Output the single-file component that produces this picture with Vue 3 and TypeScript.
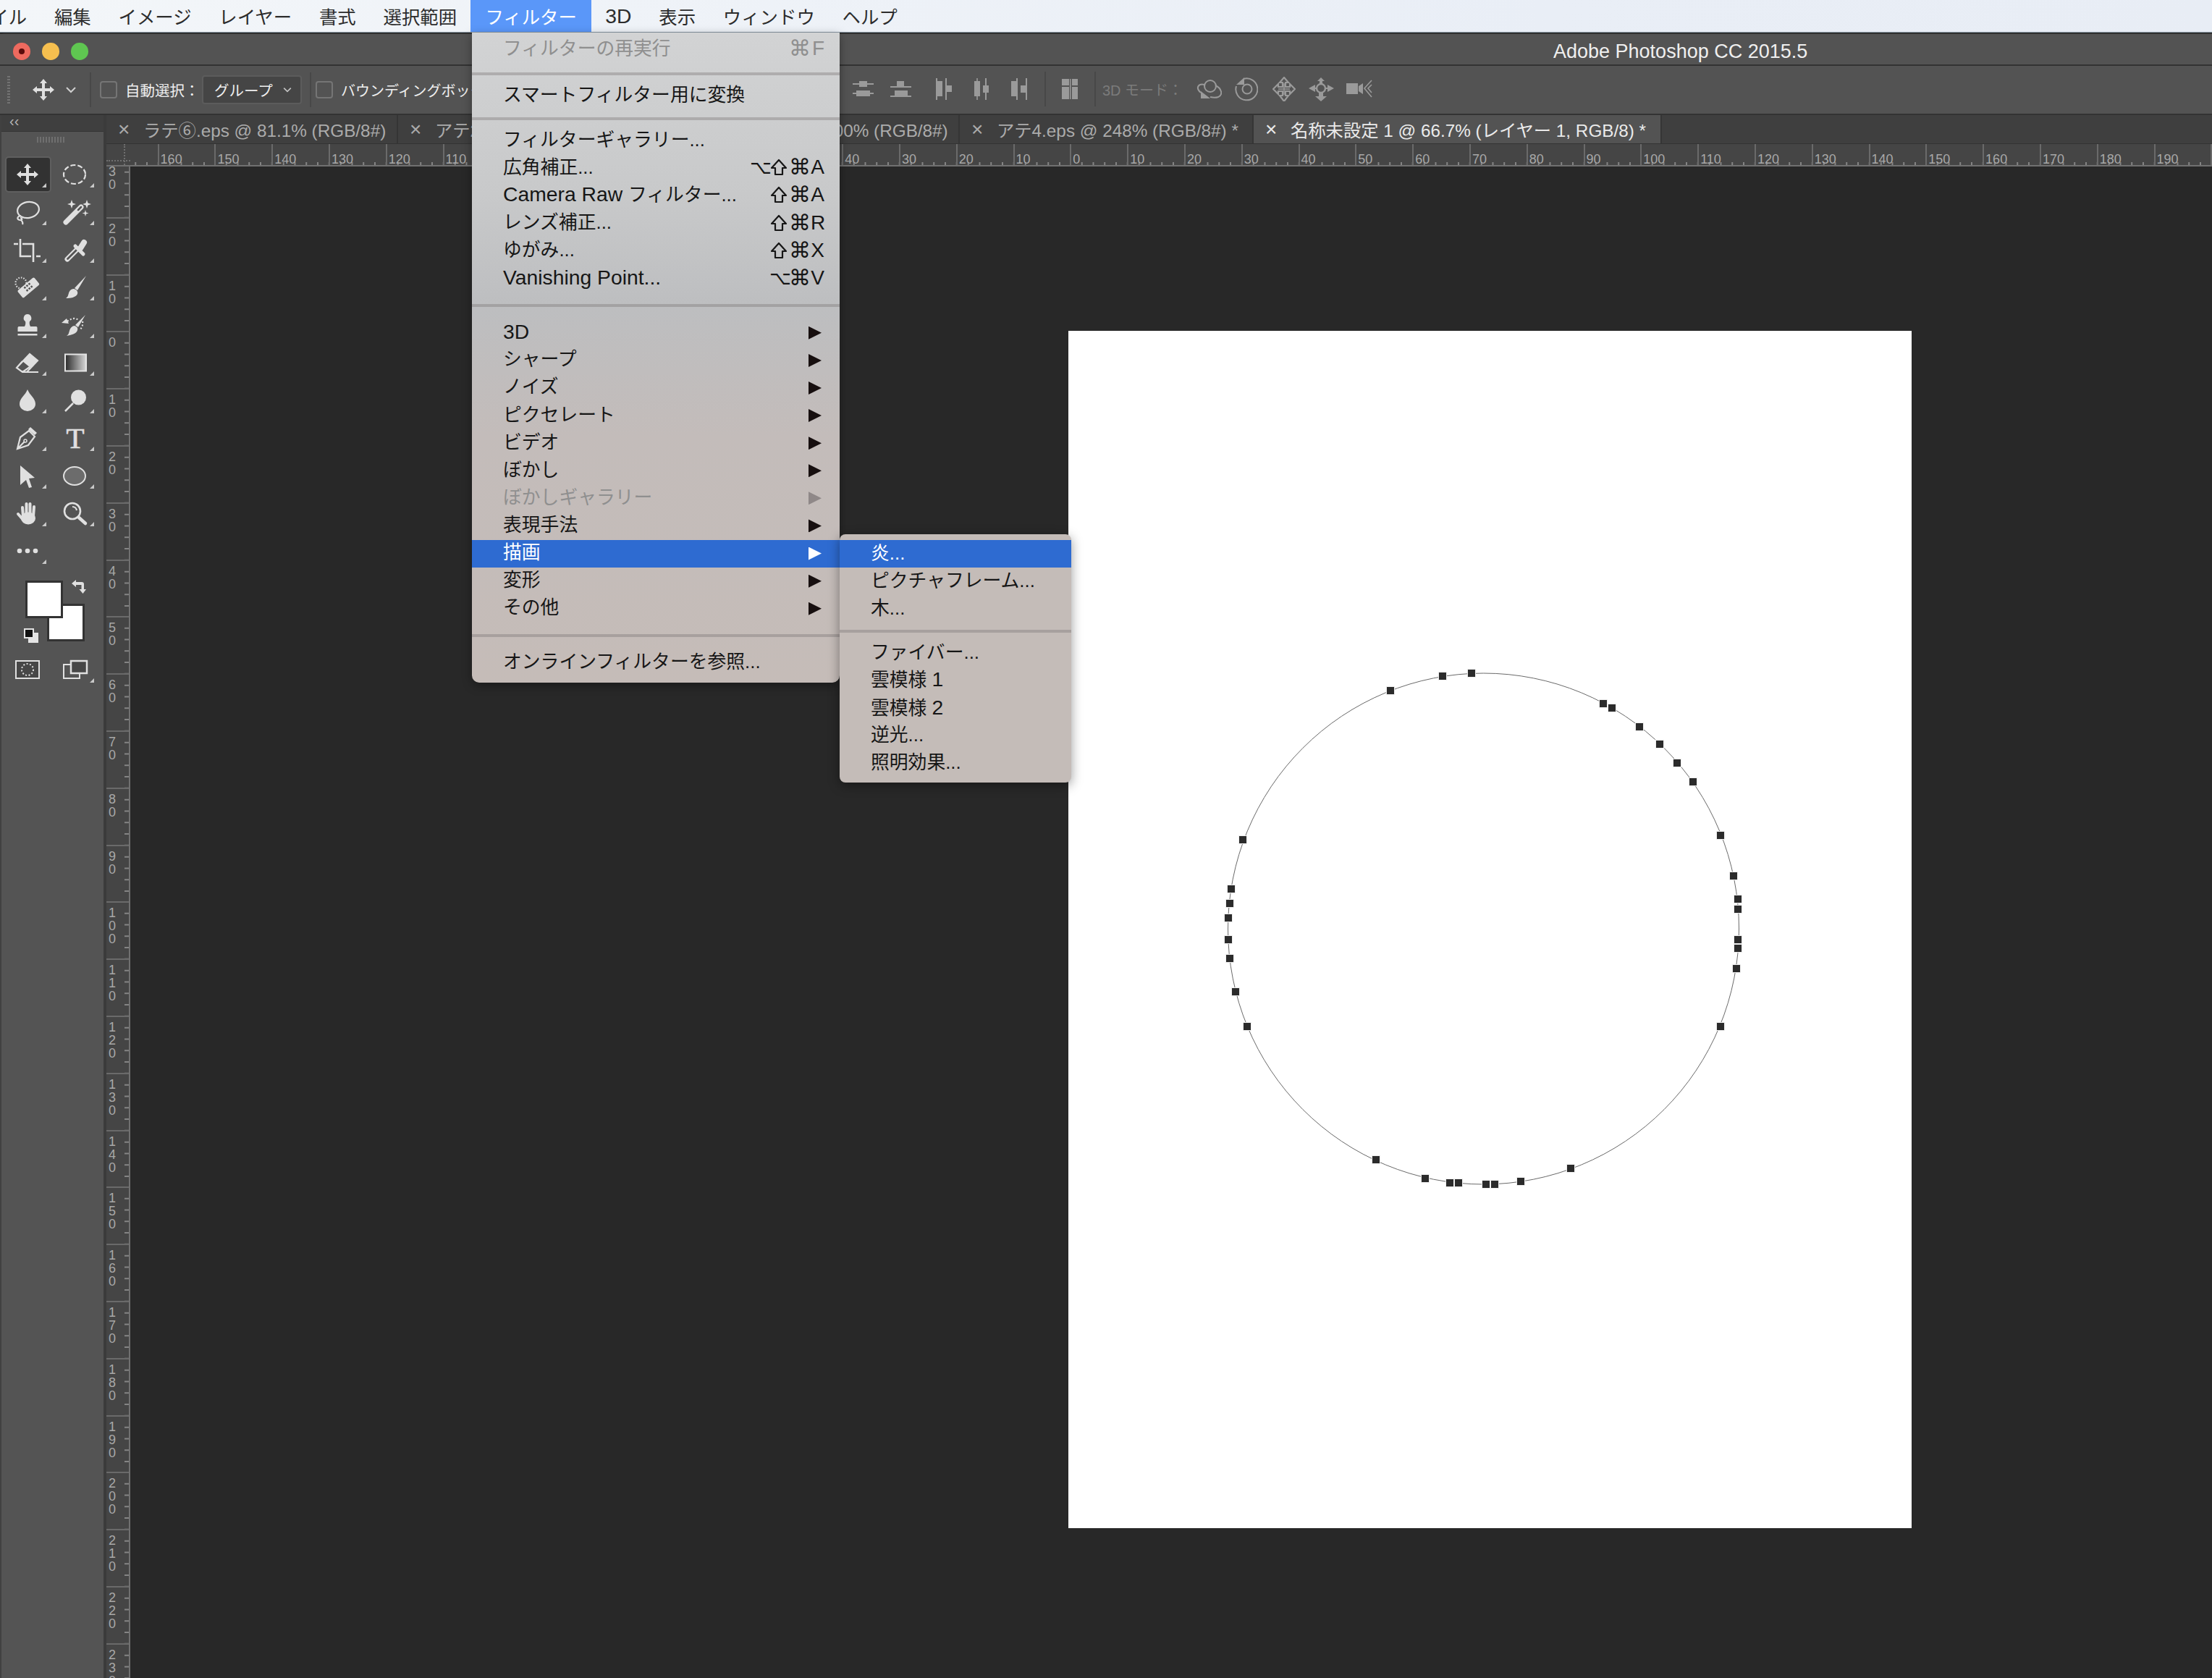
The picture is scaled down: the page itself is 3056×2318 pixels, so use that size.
<script setup lang="ts">
type Item = { lat?: string; label?: string; keys?: string[]; off?: boolean; sub?: boolean; active?: boolean; sep?: string }

const menubar = ['ファイル', '編集', 'イメージ', 'レイヤー', '書式', '選択範囲', 'フィルター', '3D', '表示', 'ウィンドウ', 'ヘルプ']

const mainMenu: Item[] = [
  { label: 'フィルターの再実行', off: true, keys: ['⌘', 'F'] },
  { sep: 'a' },
  { label: 'スマートフィルター用に変換' },
  { sep: 'b' },
  { label: 'フィルターギャラリー...' },
  { label: '広角補正...', keys: ['⌥', '⇧', '⌘', 'A'] },
  { lat: 'Camera Raw ', label: 'フィルター...', keys: ['⇧', '⌘', 'A'] },
  { label: 'レンズ補正...', keys: ['⇧', '⌘', 'R'] },
  { label: 'ゆがみ...', keys: ['⇧', '⌘', 'X'] },
  { lat: 'Vanishing Point...', keys: ['⌥', '⌘', 'V'] },
  { sep: 'c' },
  { lat: '3D', sub: true },
  { label: 'シャープ', sub: true },
  { label: 'ノイズ', sub: true },
  { label: 'ピクセレート', sub: true },
  { label: 'ビデオ', sub: true },
  { label: 'ぼかし', sub: true },
  { label: 'ぼかしギャラリー', sub: true, off: true },
  { label: '表現手法', sub: true },
  { label: '描画', sub: true, active: true },
  { label: '変形', sub: true },
  { label: 'その他', sub: true },
  { sep: 'c' },
  { label: 'オンラインフィルターを参照...' }
]

const subMenu: Item[] = [
  { label: '炎...', active: true },
  { label: 'ピクチャフレーム...' },
  { label: '木...' },
  { sep: 'd' },
  { label: 'ファイバー...' },
  { label: '雲模様 ', lat: '1' },
  { label: '雲模様 ', lat: '2' },
  { label: '逆光...' },
  { label: '照明効果...' }
]

const tabs = [
  { text: 'ラテ⑥.eps @ 81.1% (RGB/8#)', w: 403 },
  { text: 'アテ2.eps @ 100% (RGB/8#)', w: 391 },
  { text: 'アテ3.eps @ 100% (RGB/8#)', w: 385 },
  { text: 'アテ4.eps @ 248% (RGB/8#) *', w: 406 },
  { text: '名称未設定 1 @ 66.7% (レイヤー 1, RGB/8) *', w: 564, on: true }
]

const hTicks: number[] = []
for (let n = -170; n <= 200; n += 10) hTicks.push(n)
const vTicks: number[] = []
for (let n = -30; n <= 240; n += 10) vTicks.push(n)

const anchors: [number, number][] = [
  [1921, 955], [1993, 935], [2033, 931], [2215, 973], [2227, 979], [2265, 1005], [2293, 1029], [2317, 1055],
  [2339, 1081], [2377, 1155], [2395, 1211], [2401, 1243], [2401, 1257], [2401, 1299], [2401, 1311], [2399, 1339],
  [1717, 1161], [1701, 1229], [1699, 1249], [1697, 1269], [1697, 1299], [1699, 1325], [1707, 1371], [1723, 1419],
  [2377, 1419], [1901, 1603], [1969, 1629], [2003, 1635], [2015, 1635], [2053, 1637], [2065, 1637], [2101, 1633], [2170, 1615]
]
const docX = 1476
const docY = 458

function keyClass(k: string): string {
  if (k === '⌘') return 'k-sym k-cmd'
  if (k === '⌥') return 'k-sym k-opt'
  return 'k-letter'
}
</script>

<template>
  <div class="screen">
    <nav class="menubar">
      <span v-for="m in menubar" :key="m" class="mb-item" :class="{ on: m === 'フィルター', lat: m === '3D' }">{{ m }}</span>
    </nav>

    <div class="window">
      <header class="titlebar">
        <div class="lights">
          <i class="light red"><b></b></i>
          <i class="light yellow"></i>
          <i class="light green"></i>
        </div>
        <span class="title">Adobe Photoshop CC 2015.5</span>
      </header>

      <div class="options">
        <i class="grip"></i>
        <svg class="opt-move" width="34" height="32" viewBox="16 10 34 32"><path class="ico" d="M33 11l5 6h-3v7h7v-3l6 5-6 5v-3h-7v7h3l-5 6-5-6h3v-7h-7v3l-6-5 6-5v3h7v-7h-3z" /></svg>
        <svg class="chev" width="14" height="10" viewBox="0 0 14 10"><path d="M1 2l6 6 6-6" fill="none" stroke="#cfcfcf" stroke-width="2" /></svg>
        <i class="opt-sep s1"></i>
        <i class="check c1"></i>
        <span class="opt-label">自動選択：</span>
        <div class="select"><span>グループ</span><svg width="12" height="8" viewBox="0 0 14 10"><path d="M1 2l6 6 6-6" fill="none" stroke="#c4c4c4" stroke-width="2" /></svg></div>
        <i class="opt-sep s2"></i>
        <i class="check c2"></i>
        <span class="opt-label bbox">バウンディングボックスを表示</span>
        <div class="dim-icons">
          <svg width="29" height="32" viewBox="0 0 29 32"><path class="dim" d="M9 5h11v8H9zM0 8h29v2H0zM5 18h19v8H5zM0 21h29v2H0z" /></svg>
          <svg class="g23" width="29" height="32" viewBox="0 0 29 32"><path class="dim" d="M9 5h10v8H9zM0 12h29v2H0zM6 18h18v8H6zM0 25h29v2H0z" /></svg>
          <svg class="g34" width="22" height="32" viewBox="0 0 22 32"><path class="dim" d="M0 1h2v30H0zM1 5h8v21H1zM13 1h2v30h-2zM14 11h8v9h-8z" /></svg>
          <svg class="g31" width="20" height="32" viewBox="0 0 20 32"><path class="dim" d="M3.200 1h1.600v30H3.200zM0 5h8v21H0zM15 1h2v30h-2zM12 11h8v10h-8z" /></svg>
          <svg class="g31" width="22" height="32" viewBox="0 0 22 32"><path class="dim" d="M0 5h8v21H0zM7 1h2v30H7zM13 11h8v10h-8zM20 1h2v30h-2z" /></svg>
          <i class="opt-sep s3"></i>
          <svg class="g22" width="22" height="32" viewBox="0 0 22 32"><path class="dim" d="M0 2h10v9H0zM14 2h8v9h-8zM0 13h10v17H0zM14 13h8v17h-8zM11 2h1.500v28H11z" /></svg>
          <i class="opt-sep s4"></i>
          <span class="mode3d">3D モード：</span>
          <svg width="36" height="32" viewBox="0 0 36 32" fill="none" stroke="#9a9a9a" stroke-width="2"><circle cx="20" cy="12" r="8" /><path d="M7 21C-1 14 4 8 12 10M27 11c9 4 11 13 4 16-3 1-7 1-11 0" /><path d="M7 19v10h13z" fill="#9a9a9a" stroke="none" /></svg>
          <svg class="g18" width="32" height="33" viewBox="0 0 32 33" fill="none" stroke="#9a9a9a" stroke-width="2"><path d="M12 2a15 15 0 1 1-10 10" /><circle cx="17" cy="16" r="6.500" /><path d="M2 10L13 0v10z" fill="#9a9a9a" stroke="none" /></svg>
          <svg class="g20" width="32" height="34" viewBox="0 0 32 34" fill="none" stroke="#9a9a9a" stroke-width="2.200"><path d="M16 1l6 7h-4v6h6v-4l7 7-7 7v-4h-6v6h4l-6 8-6-8h4v-6H8v4l-7-7 7-7v4h6V8h-4z" /><path d="M16 9v16M8 17h16" stroke-width="1.500" /></svg>
          <svg class="g18" width="35" height="33" viewBox="0 0 35 33"><circle cx="17" cy="15" r="6" fill="none" stroke="#9a9a9a" stroke-width="2.400" /><path class="dim" d="M17 0l5 5h-3v4h-4V5h-3zM0 15l9-5v4h2v2H9v4zM35 15l-9-5v4h-2v2h2v4zM17 33l-8-7h5v-5h6v5h5z" /></svg>
          <svg class="g17" width="37" height="26" viewBox="0 0 37 26"><path class="dim" d="M0 5h16v15H0zM17 9l6-4v15l-6-4z" /><path d="M35 1L25 12l10 12M35 7l-5 5 5 6" fill="none" stroke="#9a9a9a" stroke-width="1.600" /></svg>
        </div>
      </div>

      <div class="body">
        <aside class="toolbar">
          <div class="tb-head"><span>‹‹</span></div>
          <div class="tb-grip"><i></i></div>
          <div class="tools">
            <div class="tool more on"><svg viewBox="0 0 66 52"><path class="ico" d="M33 11l5 6h-3v7h7v-3l6 5-6 5v-3h-7v7h3l-5 6-5-6h3v-7h-7v3l-6-5 6-5v3h7v-7h-3z" /></svg></div>
            <div class="tool more"><svg viewBox="0 0 66 52"><ellipse cx="32" cy="26" rx="15" ry="13" class="line" stroke-dasharray="7 3" /></svg></div>

            <div class="tool more"><svg viewBox="0 0 66 52"><ellipse cx="34" cy="23" rx="15" ry="11" transform="rotate(-10 34 23)" class="line" /><path class="line" d="M24 31c-6 1-6 6-1 6 3 0 3-3 0-3M24 37c2 2 3 4 2 6" /></svg></div>
            <div class="tool more"><svg viewBox="0 0 66 52"><path class="ico" d="M28 9l1.500 4.500 4.500 1.500-4.500 1.500-1.500 4.500-1.500-4.500-4.500-1.500 4.500-1.500zM49 9l1.500 4.500 4.500 1.500-4.500 1.500-1.500 4.500-1.500-4.500-4.500-1.500 4.500-1.500zM47 23l1 3.500 3.500 1-3.500 1-1 3.500-1-3.500-3.500-1 3.500-1z" /><path d="M20 40L41 19" stroke="#e0e0e0" stroke-width="7" stroke-linecap="round" /><path d="M37 23l4-4" stroke="#535353" stroke-width="2.500" stroke-linecap="round" /></svg></div>

            <div class="tool more"><svg viewBox="0 0 66 52"><path class="line thick" d="M23 11v24h15M26 18h15v25M14 18h6M45 35h6" /></svg></div>
            <div class="tool more"><svg viewBox="0 0 66 52"><path d="M22 39L36 25" stroke="#e0e0e0" stroke-width="7" stroke-linecap="round" /><path d="M22.500 38.500L36 25" stroke="#535353" stroke-width="2.800" stroke-linecap="round" /><path d="M33 21l11 11" stroke="#e0e0e0" stroke-width="5" stroke-linecap="round" /><path d="M40 24l5-8" stroke="#e0e0e0" stroke-width="8" stroke-linecap="round" /></svg></div>

            <div class="tool more"><svg viewBox="0 0 66 52"><circle cx="24" cy="20" r="7.500" class="line" stroke-width="1.600" stroke-dasharray="1.500 2" /><rect x="19" y="20" width="30" height="13" rx="2" transform="rotate(-40 34 26)" fill="#e0e0e0" /><g fill="#535353" transform="rotate(-40 34 26)"><rect x="29" y="22" width="2.500" height="2.500" /><rect x="33" y="22" width="2.500" height="2.500" /><rect x="37" y="22" width="2.500" height="2.500" /><rect x="29" y="27" width="2.500" height="2.500" /><rect x="33" y="27" width="2.500" height="2.500" /><rect x="37" y="27" width="2.500" height="2.500" /></g></svg></div>
            <div class="tool more"><svg viewBox="0 0 66 52"><path class="ico" d="M48 10L36 30l-4-3zM31 28c4 1 6 4 5 7-2 5-10 6-16 6 3-2 3-4 4-7 1-4 4-6 7-6z" /></svg></div>

            <div class="tool more"><svg viewBox="0 0 66 52"><path class="ico" d="M33 11a5.500 5.500 0 0 1 3 10c-.5 2-.5 4 1 7h8c1 0 1.500 1 1.500 2v5h-27v-5c0-1 .5-2 1.500-2h8c1.500-3 1.500-5 1-7a5.500 5.500 0 0 1 3-10zM19.500 38h27v2.500h-27z" /></svg></div>
            <div class="tool more"><svg viewBox="0 0 66 52"><path class="ico" d="M47 12L37 29l-4-3zM32 27c3 1 5 3 4 6-1 5-9 7-15 8 3-2 3-4 4-7 1-4 4-7 7-7zM14 23l7-6 3 7z" /><path class="line" stroke-width="1.800" d="M22 21c6-5 12-5 15-2M43 21c1 5-1 9-4 12" stroke-dasharray="2 2.500" /></svg></div>

            <div class="tool more"><svg viewBox="0 0 66 52"><path class="ico" d="M36 14l11 9-10 10-11-9z" /><path class="line" d="M36 14L18 33l8 6h6l15-16zM18 33l8-9M26 39l10-7M32 39h16" /></svg></div>
            <div class="tool more"><svg viewBox="0 0 66 52"><defs><linearGradient id="grad" x1="0" x2="1" y1="0" y2="0"><stop offset="0" stop-color="#2a2a2a" /><stop offset="1" stop-color="#d8d8d8" /></linearGradient></defs><rect x="19" y="14.500" width="29" height="23" fill="url(#grad)" stroke="#e4e4e4" stroke-width="2" /></svg></div>

            <div class="tool more"><svg viewBox="0 0 66 52"><path class="ico" d="M33 11c3 8 11 12 11 20a11 10 0 0 1-22 0c0-8 8-12 11-20z" /></svg></div>
            <div class="tool more"><svg viewBox="0 0 66 52"><circle cx="37.500" cy="22" r="10.500" class="ico" /><path d="M30 30L19 41" stroke="#e0e0e0" stroke-width="2.500" /></svg></div>

            <div class="tool more"><svg viewBox="0 0 66 52"><path class="line" d="M19 41l4-16 12-9 8 8-9 12zM19 41l10-10" /><path d="M37 11l9 8-3 3-9-8z" fill="#e0e0e0" /><circle cx="30" cy="30" r="2" fill="none" stroke="#e0e0e0" stroke-width="1.500" /></svg></div>
            <div class="tool more"><svg viewBox="0 0 66 52"><text x="33" y="40" text-anchor="middle" font-family="Liberation Serif, serif" font-size="41" fill="#e0e0e0" stroke="#e0e0e0" stroke-width="0.700">T</text></svg></div>

            <div class="tool more"><svg viewBox="0 0 66 52"><path class="ico" d="M23 12l20 17-8 1 4 12-4 1-4-11-8 7z" /></svg></div>
            <div class="tool more"><svg viewBox="0 0 66 52"><ellipse cx="32" cy="26.500" rx="15" ry="12.500" fill="#6c6c6c" stroke="#e0e0e0" stroke-width="2" /></svg></div>

            <div class="tool more"><svg viewBox="0 0 66 52"><g stroke="#e0e0e0" stroke-width="4" stroke-linecap="round"><path d="M26 18l1 13M31.500 13v15M36.500 13v15M42 17l-1 13M20 27l7 8" /></g><ellipse cx="34" cy="33" rx="10" ry="8.500" fill="#e0e0e0" /></svg></div>
            <div class="tool more"><svg viewBox="0 0 66 52"><circle cx="29" cy="23" r="11" class="line thick" /><path class="line" stroke-width="1.800" d="M29 17a6 6 0 0 1 6 5" /><path d="M38 32l9 8" stroke="#e0e0e0" stroke-width="4.500" stroke-linecap="round" /></svg></div>

            <div class="tool more"><svg viewBox="0 0 66 52"><g fill="#e0e0e0"><circle cx="22" cy="26" r="3.300" /><circle cx="33" cy="26" r="3.300" /><circle cx="44" cy="26" r="3.300" /></g></svg></div>
          </div>

          <div class="swatches">
            <i class="sw bg"></i>
            <i class="sw fg"></i>
            <svg class="swap" width="20" height="19" viewBox="0 0 20 19"><path class="ico" d="M0 5l6-5v3h8c2 0 3 1 3 3v7h3l-4.500 6-5-6h3V7H6v3z" /></svg>
            <div class="mini"><i class="m2"></i><i class="m1"></i></div>
          </div>

          <div class="modes">
            <svg width="66" height="28" viewBox="0 0 66 28"><rect x="17" y="2" width="32" height="24" fill="#474747" stroke="#e0e0e0" stroke-width="2" /><circle cx="33" cy="14" r="8" fill="none" stroke="#e0e0e0" stroke-width="2" stroke-dasharray="2 2.500" /></svg>
            <div class="tool-mode more"><svg width="66" height="28" viewBox="0 0 66 28"><rect x="17" y="7" width="22" height="19" fill="none" stroke="#e0e0e0" stroke-width="2" /><rect x="27" y="2" width="22" height="17" fill="#474747" stroke="#e0e0e0" stroke-width="2.500" /></svg></div>
          </div>
        </aside>

        <div class="stage">
          <div class="tabs">
            <div v-for="t in tabs" :key="t.text" class="tab" :class="{ on: t.on }" :style="{ width: t.w + 'px' }">
              <span class="x">×</span><span class="tab-text">{{ t.text }}</span>
            </div>
          </div>

          <div class="h-ruler">
            <div class="corner"><i class="ch"></i><i class="cv"></i></div>
            <div class="h-track">
              <div class="h-inner">
                <div v-for="n in hTicks" :key="n" class="h-cell"><span>{{ Math.abs(n) }}</span></div>
              </div>
            </div>
          </div>

          <div class="main">
            <div class="v-ruler">
              <div v-for="n in vTicks" :key="n" class="v-cell">
                <span v-for="(d, i) in String(Math.abs(n))" :key="i">{{ d }}</span>
              </div>
            </div>
            <div class="canvas">
              <div class="doc">
                <svg width="1165" height="1654" viewBox="0 0 1165 1654">
                  <circle :cx="2049.5 - docX" :cy="1284 - docY" r="353" fill="none" stroke="#6a6a6a" stroke-width="1" />
                  <rect
                    v-for="(a, i) in anchors"
                    :key="i"
                    :x="a[0] - docX - 5.5"
                    :y="a[1] - docY - 5.5"
                    width="11"
                    height="11"
                    fill="#2b2b2b"
                    stroke="#efefef"
                    stroke-width="1"
                  />
                </svg>
              </div>
            </div>
          </div>
        </div>
      </div>
    </div>

    <div class="menu main-menu">
      <template v-for="(it, i) in mainMenu" :key="i">
        <div v-if="it.sep" class="sep" :class="'sep-' + it.sep"></div>
        <div v-else class="row" :class="{ off: it.off, active: it.active }">
          <span class="row-label"><span v-if="it.lat" class="lat">{{ it.lat }}</span>{{ it.label }}</span>
          <span v-if="it.keys" class="keys">
            <template v-for="k in it.keys" :key="k">
              <svg v-if="k === '⇧'" class="k-shift" width="26" height="26" viewBox="0 0 26 26"><path d="M13 3L23 14h-5v9H8v-9H3z" fill="none" stroke="currentColor" stroke-width="2.200" stroke-linejoin="round" /></svg>
              <span v-else :class="keyClass(k)">{{ k }}</span>
            </template>
          </span>
          <i v-if="it.sub" class="arrow"></i>
        </div>
      </template>
    </div>

    <div class="menu sub-menu">
      <template v-for="(it, i) in subMenu" :key="i">
        <div v-if="it.sep" class="sep" :class="'sep-' + it.sep"></div>
        <div v-else class="row" :class="{ active: it.active }">
          <span class="row-label">{{ it.label }}<span v-if="it.lat" class="lat">{{ it.lat }}</span></span>
        </div>
      </template>
    </div>
  </div>
</template>

<style>
html, body { margin: 0; background: #282828; }
</style>

<style scoped>
.screen {
  position: relative;
  width: 3056px;
  height: 2318px;
  overflow: hidden;
  display: flex;
  flex-direction: column;
  font-family: "Liberation Sans", "Noto Sans CJK JP", sans-serif;
  background: #282828;
}

/* menu bar */
.menubar {
  height: 44px;
  flex: none;
  display: flex;
  background: linear-gradient(90deg, #f3f6f9, #e9eef6 70%, #e8edf5);
  border-bottom: 1px solid #8795a2;
  font-size: 25.400px;
  color: #2c2c2c;
  overflow: hidden;
}
.mb-item {
  display: flex;
  align-items: center;
  padding: 0 18.900px;
  white-space: nowrap;
}
.mb-item:first-child { margin-left: -83.300px; }
.mb-item.on { padding: 0 20.500px; background: #5a97f9; color: #fff; }
.lat { font-size: 28.300px; }

/* window */
.window {
  flex: 1;
  min-height: 0;
  display: flex;
  flex-direction: column;
  border-top: 2px solid #2f2f2f;
  border-top-left-radius: 8px;
  background: #535353;
}
.titlebar {
  height: 42px;
  flex: none;
  display: flex;
  align-items: center;
  border-bottom: 2px solid #333;
  background: #535353;
}
.lights { display: flex; gap: 16.500px; margin-left: 18px; margin-top: 6px; }
.light {
  width: 23.500px;
  height: 23.500px;
  border-radius: 50%;
  display: flex;
  align-items: center;
  justify-content: center;
}
.light b { width: 8px; height: 8px; border-radius: 50%; background: #5a0b0b; }
.red { background: #ee6a5f; }
.yellow { background: #f6bf4f; }
.green { background: #5fc651; }
.title { margin-left: 2024.500px; margin-top: 6px; font-size: 27px; color: #efefef; white-space: nowrap; }

/* options bar */
.options {
  height: 66px;
  flex: none;
  display: flex;
  align-items: center;
  border-bottom: 2px solid #333;
  background: #535353;
}
.grip {
  width: 4px;
  height: 38px;
  margin-left: 10px;
  background: repeating-linear-gradient(180deg, #737373 0 2px, transparent 2px 4px);
}
.opt-move { margin-left: 29px; }
.chev { margin-left: 14px; }
.opt-sep { width: 2px; height: 48px; background: #484848; flex: none; }
.s1 { margin-left: 19px; }
.s2 { margin-left: 11px; }
.check {
  width: 24px;
  height: 24px;
  box-sizing: border-box;
  border: 2px solid #757575;
  border-radius: 4px;
  flex: none;
}
.c1 { margin-left: 12px; }
.c2 { margin-left: 6px; }
.opt-label { margin-left: 11px; font-size: 20.500px; color: #efefef; white-space: nowrap; }
.bbox { width: 707px; flex: none; font-size: 20px; overflow: hidden; }
.select {
  width: 138px;
  height: 40px;
  box-sizing: border-box;
  margin-left: 3.500px;
  padding: 0 12px 0 15px;
  flex: none;
  display: flex;
  align-items: center;
  justify-content: space-between;
  background: #454545;
  border: 2px solid #5c5c5c;
  border-radius: 4px;
  font-size: 20.500px;
  color: #efefef;
}
.dim-icons { display: flex; align-items: center; margin-top: -2px; }
.dim-icons svg { flex: none; }
.g17 { margin-left: 17px; }
.g18 { margin-left: 18px; }
.g20 { margin-left: 20px; }
.g22 { margin-left: 22px; }
.g23 { margin-left: 23px; }
.g31 { margin-left: 31px; }
.g34 { margin-left: 34px; }
.s3 { margin-left: 24px; }
.s4 { margin-left: 23px; }
.mode3d { margin-left: 9px; width: 129px; flex: none; font-size: 20px; color: #7b7b7b; white-space: nowrap; }
.ico { fill: #e0e0e0; }
.dim { fill: #9a9a9a; }
.line { fill: none; stroke: #e0e0e0; stroke-width: 2.200; }
.thick { stroke-width: 2.600; }

/* body */
.body { flex: 1; min-height: 0; display: flex; }

/* toolbar */
.toolbar {
  width: 143px;
  flex: none;
  box-sizing: border-box;
  border-left: 2px solid #414141;
  background: #545454;
}
.tb-head {
  height: 23px;
  background: #3f3f3f;
  border-bottom: 1px solid #333;
  box-sizing: border-box;
  color: #b5b5b5;
  font-size: 20px;
  line-height: 16px;
  padding-left: 11px;
}
.tb-grip { height: 33px; box-sizing: border-box; padding: 7px 0 0 49px; }
.tb-grip i {
  display: block;
  width: 40px;
  height: 8px;
  background: repeating-linear-gradient(90deg, #6f6f6f 0 2px, transparent 2px 4px);
}
.tools {
  display: grid;
  grid-template-columns: 66px 66px;
  grid-auto-rows: 52px;
  padding-left: 3px;
}
.tool { position: relative; width: 66px; height: 52px; }
.tool svg { display: block; position: relative; width: 66px; height: 52px; }
.tool.on::before {
  content: "";
  position: absolute;
  inset: 1px 0 1px 2px;
  background: #323232;
  border: 2px solid #5f5f5f;
  border-radius: 5px;
  box-sizing: border-box;
}
.more::after {
  content: "";
  position: absolute;
  right: 7px;
  bottom: 8px;
  width: 6px;
  height: 6px;
  background: #c9c9c9;
  clip-path: polygon(100% 0, 100% 100%, 0 100%);
}
.swatches { position: relative; height: 86px; margin-top: 15px; }
.sw {
  position: absolute;
  width: 52px;
  height: 52px;
  box-sizing: border-box;
  background: #fff;
  border: 3px solid #333;
}
.fg { left: 33px; top: 0; }
.bg { left: 63px; top: 32px; }
.swap { position: absolute; left: 97px; top: -1px; }
.mini { position: absolute; left: 31px; top: 66px; width: 20px; height: 20px; }
.m1 { position: absolute; left: 0; top: 0; width: 14px; height: 14px; background: #111; border: 2px solid #e4e4e4; box-sizing: border-box; }
.m2 { position: absolute; left: 6px; top: 6px; width: 14px; height: 14px; background: #e4e4e4; }
.modes { display: flex; margin-top: 23px; padding-left: 3px; }
.tool-mode { position: relative; height: 28px; }
.tool-mode svg { display: block; }
.tool-mode.more::after { bottom: -4px; }

/* stage */
.stage {
  flex: 1;
  min-width: 0;
  display: flex;
  flex-direction: column;
  margin-left: 4px;
  box-shadow: -4px 0 0 #3b3b3b;
}
.tabs {
  height: 40px;
  flex: none;
  box-sizing: border-box;
  display: flex;
  background: #3f3f3f;
  border-bottom: 1px solid #333;
}
.tab {
  flex: none;
  box-sizing: border-box;
  display: flex;
  align-items: center;
  padding-left: 16px;
  font-size: 24.300px;
  color: #ababab;
  white-space: nowrap;
  overflow: hidden;
  border-right: 2px solid #353535;
}
.tab.on { background: #535353; color: #eaeaea; }
.x { width: 35px; flex: none; font-size: 28px; line-height: 28px; }

.h-ruler { height: 31px; flex: none; display: flex; background: #454545; box-sizing: border-box; border-bottom: 2px solid #707070; }
.corner { width: 33px; flex: none; position: relative; }
.ch { position: absolute; left: 0; right: 0; top: 22px; border-top: 2px dotted #707070; }
.cv { position: absolute; top: 0; bottom: 0; left: 24px; border-left: 2px dotted #707070; }
.h-track { flex: 1; min-width: 0; overflow: hidden; }
.h-inner { display: flex; margin-left: -41.200px; }
.h-cell {
  flex: 0 0 78.800px;
  height: 29px;
  box-sizing: border-box;
  border-left: 2px solid #6a6a6a;
  padding: 13px 0 0 2px;
  font-size: 18px;
  line-height: 16px;
  color: #a8a8a8;
  background-image: linear-gradient(90deg, #858585 2px, transparent 2px);
  background-size: 15.760px 4px;
  background-position: -2px 100%;
  background-repeat: repeat-x;
}
.h-cell span { display: block; }

.main { flex: 1; min-height: 0; display: flex; }
.v-ruler {
  width: 33px;
  flex: none;
  box-sizing: border-box;
  overflow: hidden;
  background: #454545;
  border-right: 2px solid #707070;
}
.v-cell {
  height: 78.800px;
  box-sizing: border-box;
  display: flex;
  flex-direction: column;
  border-top: 2px solid #6a6a6a;
  padding: 5px 0 0 3px;
  font-size: 18px;
  line-height: 18px;
  color: #a8a8a8;
  background-image: linear-gradient(#858585 2px, transparent 2px);
  background-size: 6px 15.760px;
  background-position: 100% -2px;
  background-repeat: repeat-y;
}
.v-cell:first-child { margin-top: -9px; }
.canvas { flex: 1; min-width: 0; background: #282828; padding: 227px 0 0 1296px; }
.doc { width: 1165px; height: 1654px; background: #fff; }
.doc svg { display: block; }

/* menus */
.menu {
  position: absolute;
  box-sizing: border-box;
  font-size: 25.800px;
  color: #161616;
  white-space: nowrap;
}
.main-menu {
  left: 652px;
  top: 45px;
  width: 508px;
  height: 898px;
  padding-top: 4px;
  border-radius: 0 0 10px 10px;
  background: linear-gradient(180deg, #d2d3d4 0%, #c8c9ca 25%, #bdbec0 42%, #c3bcba 62%, #c5bcb8 100%);
  box-shadow: 0 4px 14px rgba(0, 0, 0, 0.35);
}
.sub-menu {
  left: 1160px;
  top: 738px;
  width: 320px;
  height: 343px;
  padding: 8px 0;
  border-radius: 8px;
  background: #c4bcb8;
  box-shadow: 0 4px 16px rgba(0, 0, 0, 0.4);
}
.row {
  height: 38.100px;
  display: flex;
  align-items: center;
  justify-content: space-between;
  padding: 0 21px 0 43px;
}
.row.off { color: #8f8f8f; }
.row.active { background: #2e6bd1; color: #fff; }
.row-label { line-height: 38px; padding-bottom: 3px; }
.keys { display: flex; align-items: center; gap: 1px; padding-bottom: 2px; }
.k-sym { width: 26px; text-align: center; font-family: "DejaVu Sans", sans-serif; }
.k-cmd { font-size: 30px; line-height: 30px; }
.k-opt { font-size: 26px; line-height: 30px; }
.k-shift { flex: none; }
.k-letter { width: 19px; text-align: right; font-size: 28px; margin-left: 3px; }
.arrow {
  width: 18px;
  height: 18px;
  margin-right: 4px;
  background: #170f0f;
  clip-path: polygon(0 0, 100% 50%, 0 100%);
}
.row.off .arrow { background: #8f8888; }
.row.active .arrow { background: #fff; }
.sep { height: 4px; background: rgba(120, 115, 115, 0.38); }
.sep-a { margin: 13px 0 9px; }
.sep-b { margin: 11px 0 9px; }
.sep-c { margin: 16px 0 17px; }
.sep-d { margin: 10px 0 9px; }
</style>
